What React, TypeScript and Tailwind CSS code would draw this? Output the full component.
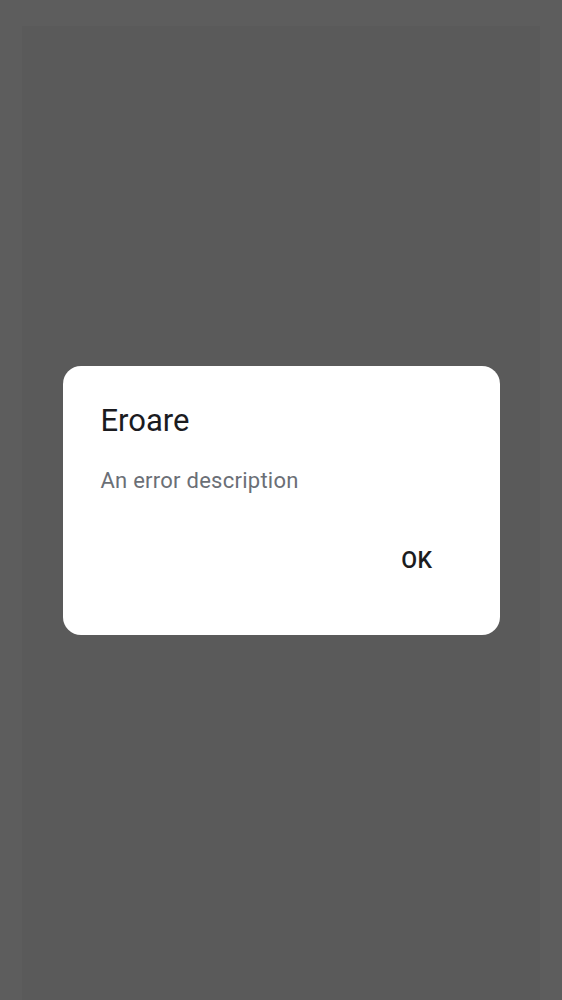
export default function App() {
  return (
    <div className="relative h-screen w-full bg-[#5d5d5d] px-[22px] pt-[26px] font-['Roboto',sans-serif]">
      <div className="h-full w-full bg-[#5a5a5a]" />

      <div className="fixed inset-0 flex items-center justify-center">
        <div className="flex w-[437px] flex-col rounded-[18px] bg-white pl-[38px] pr-[38px] pt-[37px] pb-[60px]">
          <h2 className="text-[31px] leading-[36px] font-normal text-[#1b1b1f]">Eroare</h2>
          <p className="mt-[28px] text-[22px] leading-[28px] tracking-[0.25px] text-[#6b6f76]">An error description</p>
          <div className="mt-[52px] flex justify-end">
            <button className="mr-[29px] text-[23px] leading-[28px] font-medium tracking-[0.4px] text-[#1c1c1e]">
              OK
            </button>
          </div>
        </div>
      </div>
    </div>
  );
}
